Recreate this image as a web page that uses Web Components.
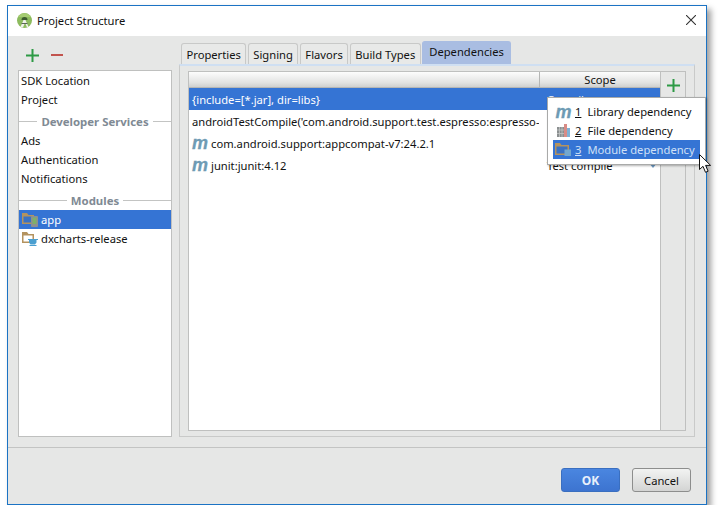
<!DOCTYPE html>
<html>
<head>
<meta charset="utf-8">
<title>Project Structure</title>
<style>
    html, body { margin: 0; background: #fff; }
    body { font-family: "Noto Sans", "Open Sans", sans-serif; font-size: 11.2px; color: #111; }
</style>
</head>
<body>
<project-dialog title-text="Project Structure">
    <side-panel slot="side">
        <side-item>SDK Location</side-item>
        <side-item>Project</side-item>
        <side-heading>Developer Services</side-heading>
        <side-item>Ads</side-item>
        <side-item>Authentication</side-item>
        <side-item>Notifications</side-item>
        <side-heading>Modules</side-heading>
        <side-item icon="app" selected>app</side-item>
        <side-item icon="lib">dxcharts-release</side-item>
    </side-panel>
    <dep-tabs slot="main" tabs='["Properties","Signing","Flavors","Build Types","Dependencies"]' active="4">
        <dep-table>
            <dep-row selected scope="Compile">{include=[*.jar], dir=libs}</dep-row>
            <dep-row scope="Compile">androidTestCompile('com.android.support.test.espresso:espresso-core:2.2.2')</dep-row>
            <dep-row icon="m" scope="Compile">com.android.support:appcompat-v7:24.2.1</dep-row>
            <dep-row icon="m" scope="Test compile">junit:junit:4.12</dep-row>
        </dep-table>
    </dep-tabs>
</project-dialog>

<script>
const ICONS = {
    folderApp: `<svg width="16" height="14" viewBox="0 0 16 14">
        <path d="M0 0h5l1.500 2H12v9H0z" fill="#b4935f"/>
        <rect x="1.500" y="3.500" width="9" height="6" fill="#3a72c4"/>
        <rect x="9" y="3" width="7" height="11" rx="1" fill="#8d9092"/>
        <rect x="10.500" y="4.500" width="4" height="6.500" fill="#7fb069"/>
    </svg>`,
    folderLib: `<svg width="16" height="14" viewBox="0 0 16 14">
        <path d="M0 0h5l1.500 2H12v9H0z" fill="#b4935f"/>
        <rect x="1.500" y="3.500" width="9" height="6" fill="#fff"/>
        <path d="M6 7h10v1h-1.500v2.500L13 12.500H8.500L7 10.500V8H6z" fill="#4b9fd0"/>
        <rect x="7.500" y="13" width="7" height="1" fill="#4b9fd0"/>
    </svg>`,
    folderModule: `<svg width="17" height="14" viewBox="0 0 17 14">
        <path d="M0 0h5l1.500 2H14v10H0z" fill="#b4935f"/>
        <rect x="1.500" y="3.500" width="11" height="7" fill="#3a72c4"/>
        <rect x="9.500" y="6.500" width="6.500" height="6.500" fill="#73a8cf"/>
    </svg>`,
    books: `<svg width="15" height="15" viewBox="0 0 15 15">
        <rect x="1" y="4" width="7" height="10" fill="#8b8f90"/>
        <path d="M1 7h7M1 10.500h7M3.500 4v10M6 4v10" stroke="#c9cbcb" stroke-width=".7"/>
        <rect x="8" y="1" width="3" height="13" fill="#d98c86"/>
        <rect x="11" y="5" width="3" height="9" fill="#7fb2d6"/>
    </svg>`,
    plus: (c) => `<svg width="13" height="13" viewBox="0 0 13 13"><path d="M6.500 0v13M0 6.500h13" stroke="${c}" stroke-width="2"/></svg>`
};

class ProjectDialog extends HTMLElement {
    constructor() {
        super();
        this.shadow = this.attachShadow({mode: 'open'});
    }

    connectedCallback() {
        this.shadow.innerHTML = `
            <style>
                :host {
                    display: flex;
                    flex-direction: column;
                    position: relative;
                    width: 698px;
                    height: 498px;
                    margin: 5px 0 0 7px;
                    background: #e6e7e6;
                    border: 1px solid #1b73c4;
                    box-shadow: 4px 4px 6px rgba(0,0,0,.38);
                }
                .title {
                    height: 30px;
                    flex: none;
                    background: #fff;
                    display: flex;
                    align-items: center;
                    padding: 0 10px 2px 9px;
                    box-sizing: border-box;
                    gap: 5px;
                    color: #111;
                }
                .title span { flex: 1; }
                .body {
                    flex: 1;
                    display: flex;
                    min-height: 0;
                    padding: 6px 11px 10px 10px;
                    gap: 7px;
                }
                .left {
                    width: 154px;
                    flex: none;
                    display: flex;
                    flex-direction: column;
                }
                .tools {
                    height: 26px;
                    padding-bottom: 2px;
                    flex: none;
                    display: flex;
                    align-items: center;
                    gap: 12px;
                    padding-left: 8px;
                }
                .minus { width: 12px; height: 2px; background: #c2544e; }
                .right { flex: 1; min-width: 0; display: flex; }
                .footer {
                    height: 57px;
                    flex: none;
                    border-top: 1px solid #c3c4c3;
                    display: flex;
                    align-items: center;
                    justify-content: flex-end;
                    gap: 12px;
                    padding: 8px 15px 0 0;
                    box-sizing: border-box;
                }
            </style>
            <div class="title">
                <svg width="15" height="15" viewBox="0 0 15 15">
                    <circle cx="7.500" cy="7.500" r="7.500" fill="#8dbb5e"/>
                    <path d="M1 4a7.500 7.500 0 0 1 13 0z" fill="#a5cc72"/>
                    <path d="M4.500 7a3 3 0 0 1 6 0z" fill="#3d5c30"/>
                    <path d="M3.500 14l3-7h2l3 7-1.500.500-2-5-2 5z" fill="#f0f2ec"/>
                    <path d="M4.500 10.500h6" stroke="#5b6655"/>
                </svg>
                <span>${this.getAttribute('title-text')}</span>
                <svg width="10" height="10" viewBox="0 0 10 10"><path d="M0 0l10 10M10 0L0 10" stroke="#333" stroke-width="1.100"/></svg>
            </div>
            <div class="body">
                <div class="left">
                    <div class="tools">
                        ${ICONS.plus('#2d9a45')}
                        <div class="minus"></div>
                    </div>
                    <slot name="side"></slot>
                </div>
                <div class="right"><slot name="main"></slot></div>
            </div>
            <div class="footer">
                <dialog-button primary>OK</dialog-button>
                <dialog-button>Cancel</dialog-button>
            </div>
            <add-menu></add-menu>
        `;
    }
}
customElements.define('project-dialog', ProjectDialog);

class SidePanel extends HTMLElement {
    constructor() {
        super();
        this.attachShadow({mode: 'open'}).innerHTML = `
            <style>
                :host {
                    display: block;
                    flex: 1;
                    background: #fff;
                    border: 1px solid #bfc0bf;
                    box-sizing: border-box;
                }
            </style>
            <slot></slot>
        `;
    }
}
customElements.define('side-panel', SidePanel);

class SideItem extends HTMLElement {
    constructor() {
        super();
        this.attachShadow({mode: 'open'});
    }

    connectedCallback() {
        const icon = this.getAttribute('icon');
        const svg = icon === 'app' ? ICONS.folderApp : icon === 'lib' ? ICONS.folderLib : '';
        this.shadowRoot.innerHTML = `
            <style>
                :host {
                    display: flex;
                    align-items: center;
                    gap: 3px;
                    height: 19px;
                    padding-left: 2px;
                    color: #111;
                }
                :host([icon]) { padding-left: 3px; }
                :host([selected]) { background: #3574d4; color: #fff; }
            </style>
            ${svg}<slot></slot>
        `;
    }
}
customElements.define('side-item', SideItem);

class SideHeading extends HTMLElement {
    constructor() {
        super();
        this.attachShadow({mode: 'open'}).innerHTML = `
            <style>
                :host {
                    display: flex;
                    align-items: center;
                    gap: 4px;
                    height: 19px;
                    margin-top: 3px;
                    font-size: 11.4px;
                    font-weight: 700;
                    color: #808a94;
                }
                i { flex: 1; height: 1px; background: #c3c4c3; }
            </style>
            <i></i><slot></slot><i></i>
        `;
    }
}
customElements.define('side-heading', SideHeading);

class DepTabs extends HTMLElement {
    constructor() {
        super();
        this.attachShadow({mode: 'open'});
    }

    connectedCallback() {
        const tabs = JSON.parse(this.getAttribute('tabs'));
        const active = Number(this.getAttribute('active'));
        const items = tabs.map((tab, index) => `
            <div class="tab ${index === active ? 'active' : ''}">${tab}</div>
        `).join('');
        this.shadowRoot.innerHTML = `
            <style>
                :host { display: flex; flex-direction: column; flex: 1; min-width: 0; }
                .strip {
                    height: 22px;
                    display: flex;
                    align-items: flex-end;
                    padding-left: 2px;
                    gap: 1.5px;
                    flex: none;
                }
                .tab {
                    height: 20px;
                    display: flex;
                    align-items: center;
                    padding: 0 4.5px;
                    border: 1px solid #c8c9c8;
                    border-bottom: 0;
                    border-radius: 3px 3px 0 0;
                    background: #e8e9e8;
                    color: #111;
                }
                .tab.active {
                    background: #a9bde2;
                    height: 22px;
                    border-color: #a9bde2;
                    padding: 0 6px;
                    align-items: flex-start;
                    line-height: 20px;
                }
                .pane {
                    flex: 1;
                    min-height: 0;
                    display: flex;
                    border: 1px solid #c9cac9;
                    border-top: 2px solid #cfdff2;
                    padding: 5px 8px 5px 8px;
                }
            </style>
            <div class="strip">${items}</div>
            <div class="pane"><slot></slot></div>
        `;
    }
}
customElements.define('dep-tabs', DepTabs);

class DepTable extends HTMLElement {
    constructor() {
        super();
        this.attachShadow({mode: 'open'}).innerHTML = `
            <style>
                :host { display: flex; flex: 1; min-width: 0; }
                .grid {
                    flex: 1;
                    min-width: 0;
                    background: #fff;
                    border: 1px solid #bfc0bf;
                    border-right: 0;
                    display: flex;
                    flex-direction: column;
                }
                .head {
                    height: 15px;
                    flex: none;
                    display: grid;
                    grid-template-columns: 350px 1fr;
                    background: linear-gradient(#fdfdfd, #e2e3e2 70%, #cfd0cf);
                    border-bottom: 1px solid #b5b6b5;
                }
                .head div { text-align: center; line-height: 16px; }
                .head div + div { border-left: 1px solid #b5b6b5; }
                .side {
                    width: 26px;
                    flex: none;
                    border: 1px solid #bfc0bf;
                    display: flex;
                    justify-content: center;
                    padding-top: 7px;
                    box-sizing: border-box;
                }
            </style>
            <div class="grid">
                <div class="head"><div></div><div>Scope</div></div>
                <slot></slot>
            </div>
            <div class="side">${ICONS.plus('#2d9a45')}</div>
        `;
    }
}
customElements.define('dep-table', DepTable);

class DepRow extends HTMLElement {
    constructor() {
        super();
        this.attachShadow({mode: 'open'});
    }

    connectedCallback() {
        const isLib = this.getAttribute('icon') === 'm';
        this.shadowRoot.innerHTML = `
            <style>
                :host {
                    display: grid;
                    grid-template-columns: 350px 1fr;
                    height: 22px;
                    align-items: center;
                    color: #111;
                }
                :host([selected]) { background: #3574d4; color: #fff; }
                .name { display: flex; align-items: center; height: 22px; gap: 3px; padding-left: 3px; overflow: hidden; white-space: nowrap; }
                .m { font: italic 700 18px/22px "Liberation Sans", sans-serif; color: #6e9bb4; -webkit-text-stroke: .3px #6e9bb4; }
                .scope { display: flex; justify-content: space-between; align-items: center; padding: 0 3px 0 8px; }
                .arrow { width: 0; height: 0; border: 4px solid transparent; border-top: 5px solid #6e9bc4; border-bottom: 0; }
            </style>
            <div class="name">${isLib ? '<span class="m">m</span>' : ''}<slot></slot></div>
            <div class="scope"><span>${this.getAttribute('scope')}</span><span class="arrow"></span></div>
        `;
    }
}
customElements.define('dep-row', DepRow);

class AddMenu extends HTMLElement {
    constructor() {
        super();
        this.attachShadow({mode: 'open'}).innerHTML = `
            <style>
                :host {
                    display: block;
                    position: absolute;
                    left: 539px;
                    top: 91px;
                    width: 159px;
                    height: 68px;
                    box-sizing: border-box;
                    background: #fff;
                    border: 1px solid #a9aaa9;
                    box-shadow: 1px 1px 2px rgba(0,0,0,.3);
                    padding: 4px 5px;
                    color: #111;
                }
                .item { display: flex; align-items: center; height: 19px; padding-left: 2px; gap: 3px; white-space: nowrap; }
                .item.on { background: #3574d4; color: #cfe0f7; }
                .ico { width: 17px; height: 16px; display: flex; justify-content: center; align-items: center; }
                .m { font: italic 700 18px/16px "Liberation Sans", sans-serif; color: #6e9bb4; -webkit-text-stroke: .3px #6e9bb4; }
                u { margin-right: 3px; }
                .cursor { position: absolute; left: 151px; top: 56px; }
            </style>
            <div class="item"><span class="ico m">m</span><u>1</u> Library dependency</div>
            <div class="item"><span class="ico">${ICONS.books}</span><u>2</u> File dependency</div>
            <div class="item on"><span class="ico">${ICONS.folderModule}</span><u>3</u> Module dependency</div>
            <svg class="cursor" width="13" height="20" viewBox="0 0 13 20">
                <path d="M.5.500v15l3.500-3.200 2.500 6 2.600-1.100-2.500-5.800h5z" fill="#fff" stroke="#111"/>
            </svg>
        `;
    }
}
customElements.define('add-menu', AddMenu);

class DialogButton extends HTMLElement {
    constructor() {
        super();
        this.attachShadow({mode: 'open'}).innerHTML = `
            <style>
                :host {
                    display: flex;
                    align-items: center;
                    justify-content: center;
                    width: 59px;
                    height: 24px;
                    box-sizing: border-box;
                    border: 1px solid #8d8e8d;
                    border-radius: 3px;
                    background: linear-gradient(#f2f3f2, #d3d4d3);
                    color: #111;
                }
                :host([primary]) {
                    border-color: #3a6fc0;
                    background: linear-gradient(#4a86e0, #3d74d0);
                    color: #e8f0fb;
                    font-weight: 700;
                    font-size: 12px;
                }
            </style>
            <slot></slot>
        `;
    }
}
customElements.define('dialog-button', DialogButton);
</script>
</body>
</html>
